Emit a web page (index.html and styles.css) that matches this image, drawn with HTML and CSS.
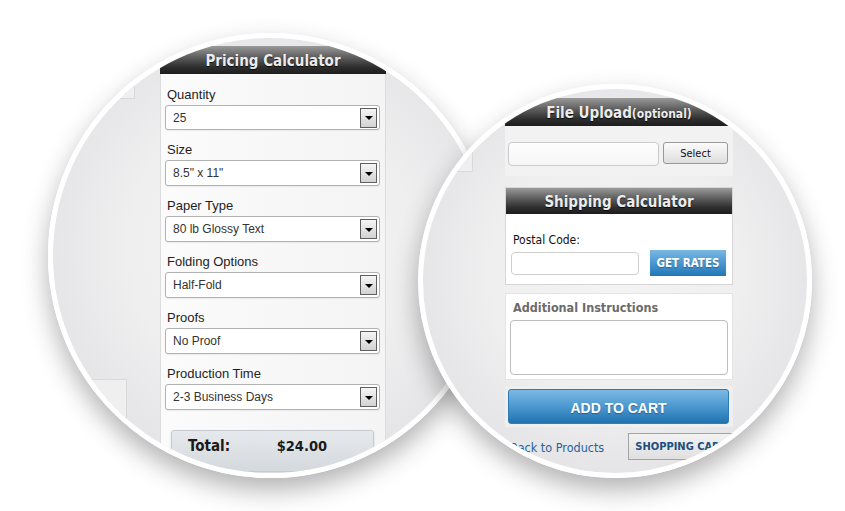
FILE: index.html
```html
<!DOCTYPE html>
<html lang="en">
<head>
    <meta charset="UTF-8">
    <meta name="viewport" content="width=device-width, initial-scale=1.0">
    <title>Pricing and Shipping</title>
    <link rel="stylesheet" href="styles.css">
</head>
<body>
    <div class="stage">
        <!-- Lens 1: pricing calculator -->
        <div class="lens lens-left">
            <div class="scene scene-left">
                <div class="ghost-col">
                    <div class="ghost ghost-top"></div>
                    <div class="ghost ghost-bottom"></div>
                </div>
                <div class="panel pricing">
                    <div class="panel-head">Pricing Calculator</div>
                    <div class="pricing-body">
                        <div class="field">
                            <label>Quantity</label>
                            <div class="select-box select-short"><span>25</span><i class="arrow"></i></div>
                        </div>
                        <div class="field">
                            <label>Size</label>
                            <div class="select-box"><span>8.5" x 11"</span><i class="arrow"></i></div>
                        </div>
                        <div class="field">
                            <label>Paper Type</label>
                            <div class="select-box"><span>80 lb Glossy Text</span><i class="arrow"></i></div>
                        </div>
                        <div class="field">
                            <label>Folding Options</label>
                            <div class="select-box"><span>Half-Fold</span><i class="arrow"></i></div>
                        </div>
                        <div class="field">
                            <label>Proofs</label>
                            <div class="select-box"><span>No Proof</span><i class="arrow"></i></div>
                        </div>
                        <div class="field">
                            <label>Production Time</label>
                            <div class="select-box"><span>2-3 Business Days</span><i class="arrow"></i></div>
                        </div>
                        <div class="total">
                            <span class="total-label">Total:</span>
                            <span class="total-value">$24.00</span>
                        </div>
                    </div>
                </div>
            </div>
        </div>

        <!-- Lens 2: upload, shipping, cart -->
        <div class="lens lens-right">
            <div class="scene scene-right">
                <div class="ghost-col ghost-col-small">
                    <div class="ghost ghost-small"></div>
                </div>
                <div class="panel order">
                    <div class="panel-head">File Upload<small>(optional)</small></div>
                    <div class="upload">
                        <input type="text" class="upload-input">
                        <button class="btn-select">Select</button>
                    </div>

                    <div class="box ship">
                        <div class="panel-head ship-head">Shipping Calculator</div>
                        <div class="ship-body">
                            <label>Postal Code:</label>
                            <div class="ship-row">
                                <input type="text" class="postal-input">
                                <button class="btn-rates">GET RATES</button>
                            </div>
                        </div>
                    </div>

                    <div class="box notes">
                        <div class="notes-title">Additional Instructions</div>
                        <textarea class="notes-area"></textarea>
                    </div>

                    <div class="cart-strip">
                        <button class="btn-cart">ADD TO CART</button>
                    </div>

                    <div class="bottom-row">
                        <a href="#" class="back-link">Back to Products</a>
                        <button class="btn-shop">SHOPPING CART</button>
                    </div>
                </div>
            </div>
        </div>
    </div>
</body>
</html>
```

FILE: styles.css
```css
body {
    margin: 0;
    background-color: #fff;
    font-family: "Liberation Sans", Arial, sans-serif;
}

.stage {
    position: relative;
    width: 845px;
    height: 511px;
    overflow: hidden;
}

/* magnifier lenses */
.lens {
    position: absolute;
    box-sizing: border-box;
    border: 5px solid #fff;
    border-radius: 50%;
    overflow: hidden;
    background: radial-gradient(circle at 50% 48%, #f4f4f5 0%, #efeff0 45%, #e4e4e6 75%, #d3d4d6 100%);
    box-shadow: 0 12px 26px rgba(0, 0, 0, 0.3);
}

.lens-left {
    left: 48px;
    top: 33px;
    width: 445px;
    height: 445px;
}

.lens-right {
    left: 418px;
    top: 84px;
    width: 394px;
    height: 394px;
}

.scene {
    display: flex;
}

.scene-left {
    padding-top: 8px;
    gap: 25px;
}

.scene-right {
    padding-top: 9px;
    gap: 32px;
}

/* faded page pieces around the panels */
.ghost-col {
    width: 82px;
    flex-shrink: 0;
}

.ghost-col-small {
    width: 50px;
}

.ghost {
    box-sizing: border-box;
    background-color: #efeff0;
    border-right: 1px solid #d9d9db;
}

.ghost-top {
    height: 53px;
    border-bottom: 1px solid #d9d9db;
}

.ghost-bottom {
    width: 74px;
    height: 140px;
    margin-top: 280px;
    border-top: 1px solid #d9d9db;
}

.ghost-small {
    height: 83px;
    margin-top: -9px;
    border-bottom: 1px solid #d9d9db;
}

/* panels */
.panel {
    flex-shrink: 0;
}

.panel-head {
    height: 28px;
    line-height: 31px;
    text-align: center;
    font-family: "DejaVu Sans Condensed", "DejaVu Sans", sans-serif;
    font-weight: bold;
    font-size: 15px;
    color: #ececec;
    text-shadow: 0 1px 1px rgba(0, 0, 0, 0.8);
    background: linear-gradient(#9a9a9a 0%, #5e5e5e 40%, #2e2e2e 75%, #1d1d1d 100%);
    overflow: hidden;
}

.panel-head small {
    font-size: 12px;
}

.pricing {
    width: 226px;
}

.pricing-body {
    box-sizing: border-box;
    height: 420px;
    padding: 13px 5px 0 4px;
    border-left: 1px solid #dcdcdc;
    border-right: 1px solid #dcdcdc;
    background: linear-gradient(to right, #fbfbfb, #f4f4f4);
}

.field {
    margin-bottom: 12px;
}

.field label {
    display: block;
    margin: 0 0 2px 2px;
    font-size: 13px;
    line-height: 16px;
    color: #1e1e1e;
}

.select-box {
    box-sizing: border-box;
    height: 26px;
    display: flex;
    align-items: center;
    padding-left: 7px;
    border: 1px solid #b2b2b2;
    border-radius: 3px;
    background-color: #fff;
    box-shadow: 0 1px 1px rgba(0, 0, 0, 0.06);
    font-size: 12px;
    color: #333;
}

.select-short {
    height: 25px;
}

.arrow {
    box-sizing: border-box;
    width: 17px;
    height: 20px;
    margin-left: auto;
    margin-right: 2px;
    border: 1px solid #5e5e5e;
    background: linear-gradient(#f6f6f6, #d2d2d2);
    display: flex;
    align-items: center;
    justify-content: center;
}

.arrow::after {
    content: "";
    border-left: 4px solid transparent;
    border-right: 4px solid transparent;
    border-top: 4px solid #000;
    margin-top: 1px;
}

.total {
    box-sizing: border-box;
    height: 42px;
    margin: 20px 6px 0 6px;
    padding: 6px 0 0 16px;
    border: 1px solid #c5cacf;
    border-radius: 3px;
    background: linear-gradient(#e6e9ec, #d4d9dd);
    box-shadow: 0 1px 2px rgba(0, 0, 0, 0.15);
    font-family: "DejaVu Sans Condensed", "DejaVu Sans", sans-serif;
    font-weight: bold;
    font-size: 15px;
    color: #1a1a1a;
}

.total-label {
    display: inline-block;
    width: 84px;
}

.total-value {
    font-size: 14.5px;
}

/* right lens */
.order {
    width: 228px;
    font-family: "DejaVu Sans Condensed", "DejaVu Sans", sans-serif;
}

.upload {
    height: 50px;
    box-sizing: border-box;
    padding: 16px 4px 0 3px;
    margin-bottom: 11px;
    display: flex;
    align-items: flex-start;
    background-color: #f2f2f3;
}

.upload-input {
    box-sizing: border-box;
    width: 151px;
    height: 24px;
    margin: 0;
    border: 1px solid #cacaca;
    border-radius: 4px;
    background: linear-gradient(#fdfdfd, #f6f6f6);
}

.btn-select {
    box-sizing: border-box;
    width: 65px;
    height: 22px;
    margin-left: 4px;
    padding: 0;
    border: 1px solid #999;
    border-radius: 3px;
    background: linear-gradient(#fbfbfb, #dedede);
    font-family: "DejaVu Sans Condensed", "DejaVu Sans", sans-serif;
    font-size: 11px;
    color: #111;
}

.box {
    border: 1px solid #d6d6d6;
    background-color: #fff;
}

.ship-head {
    height: 26px;
    line-height: 29px;
}

.ship-body {
    padding: 18px 6px 8px 5px;
}

.ship-body label {
    display: block;
    margin-left: 2px;
    margin-bottom: 2px;
    font-size: 12px;
    line-height: 16px;
    color: #111;
}

.ship-row {
    display: flex;
    align-items: center;
    justify-content: space-between;
    height: 26px;
}

.postal-input {
    box-sizing: border-box;
    width: 128px;
    height: 23px;
    margin: 0;
    border: 1px solid #cfcfcf;
    border-radius: 4px;
    background-color: #fff;
}

.btn-rates {
    box-sizing: border-box;
    width: 76px;
    height: 26px;
    padding: 0;
    border: none;
    background: linear-gradient(#7ab8e3 0%, #4a97d0 50%, #2277b6 100%);
    font-family: "DejaVu Sans Condensed", "DejaVu Sans", sans-serif;
    font-weight: bold;
    font-size: 11.5px;
    color: #fff;
    text-shadow: 0 1px 1px rgba(0, 0, 0, 0.25);
}

.notes {
    margin-top: 8px;
    padding: 6px 4px 4px 4px;
    border-color: #e4e4e4;
}

.notes-title {
    margin-left: 3px;
    font-weight: bold;
    font-size: 12.5px;
    line-height: 16px;
    color: #6b6b6b;
}

.notes-area {
    display: block;
    box-sizing: border-box;
    width: 218px;
    height: 55px;
    margin-top: 4px;
    border: 1px solid #bdbdbd;
    border-radius: 4px;
    resize: none;
    background-color: #fff;
}

.cart-strip {
    margin-top: 6px;
    padding: 3px 4px 3px 3px;
    background-color: #efeff0;
}

.btn-cart {
    display: block;
    box-sizing: border-box;
    width: 221px;
    height: 35px;
    padding: 2px 0 0 0;
    border: 1px solid #2f7bb5;
    border-radius: 3px;
    background: linear-gradient(#7cb9e4 0%, #4c98d0 50%, #1f72b0 100%);
    font-family: "Liberation Sans", Arial, sans-serif;
    font-weight: bold;
    font-size: 14px;
    color: #fff;
    text-shadow: 0 1px 1px rgba(0, 0, 0, 0.3);
}

.bottom-row {
    display: flex;
    align-items: center;
    justify-content: space-between;
    margin-top: 6px;
    height: 27px;
}

.back-link {
    margin-left: 5px;
    padding-top: 2px;
    font-size: 12.5px;
    color: #1f62a0;
    text-decoration: none;
}

.btn-shop {
    box-sizing: border-box;
    height: 27px;
    padding: 0 6px;
    border: 1px solid #a3a3a3;
    background: linear-gradient(#f2f2f2, #e0e0e0);
    font-family: "DejaVu Sans Condensed", "DejaVu Sans", sans-serif;
    font-weight: bold;
    font-size: 11px;
    color: #1b4e82;
    white-space: nowrap;
}
```
